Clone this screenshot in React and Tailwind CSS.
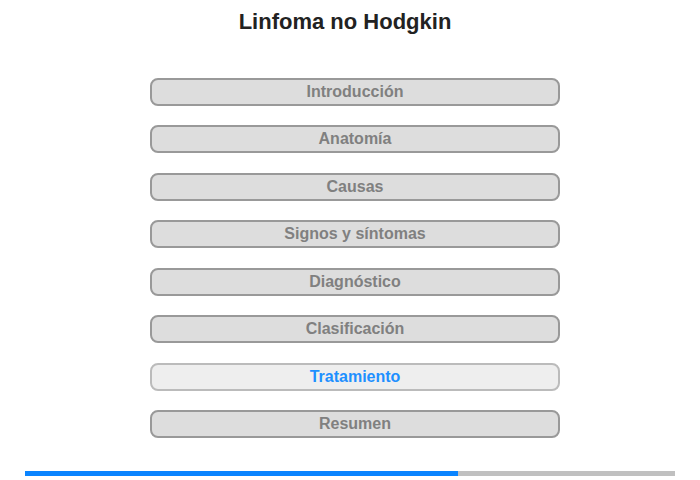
import React from 'react';

const sections = [
  'Introducción',
  'Anatomía',
  'Causas',
  'Signos y síntomas',
  'Diagnóstico',
  'Clasificación',
  'Tratamiento',
  'Resumen',
];

const active = 'Tratamiento';

export default function App() {
  return (
    <div className="w-[700px] h-[480px] bg-white flex flex-col font-['Liberation_Sans',Arial,sans-serif] overflow-hidden">
      {/* Title */}
      <h1 className="pt-[9px] pr-[10px] text-center text-[22px] leading-[26px] font-bold text-[#222]">
        Linfoma no Hodgkin
      </h1>

      {/* Section buttons */}
      <div className="mt-[43px] ml-[150px] w-[410px] flex flex-col gap-[19.43px]">
        {sections.map(s => (
          <button
            key={s}
            className={`h-[28px] w-full rounded-[8px] border-2 text-[16px] leading-none font-bold ${
              s === active
                ? 'bg-[#eeeeee] border-[#bbbbbb] text-[#1e90ff]'
                : 'bg-[#dddddd] border-[#999999] text-[#808080]'
            }`}
          >
            {s}
          </button>
        ))}
      </div>

      {/* Progress */}
      <div className="mt-auto mb-[4px] mx-[25px] h-[5px] bg-[#c0c0c0] flex">
        <div className="h-full w-[433px] bg-[#0a84ff]" />
      </div>
    </div>
  );
}
